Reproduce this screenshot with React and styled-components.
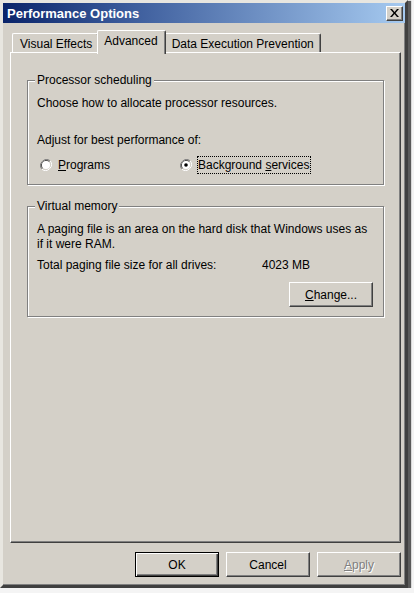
import React from "react";
import styled, { createGlobalStyle } from "styled-components";

const Global = createGlobalStyle`
  body {
    margin: 0;
    background: #f4f4f4;
    font-family: "Liberation Sans", Arial, sans-serif;
    font-size: 12px;
    color: #000;
  }
`;

export default function App() {
  return (
    <>
      <Global />
      <Window>
        <TitleBar>
          <Title>Performance Options</Title>
          <CloseButton>
            <svg width="9" height="8" viewBox="0 0 9 8">
              <path d="M0 0h2l2.5 3 2.5-3h2L5.5 4 9 8H7L4.5 5 2 8H0l3.5-4z" fill="#000" />
            </svg>
          </CloseButton>
        </TitleBar>
        <Body>
          <Tabs>
            <Tab>Visual Effects</Tab>
            <Tab active>Advanced</Tab>
            <Tab>Data Execution Prevention</Tab>
          </Tabs>
          <Panel>
            <Group>
              <Legend>Processor scheduling</Legend>
              <Line>Choose how to allocate processor resources.</Line>
              <Line top={22}>Adjust for best performance of:</Line>
              <RadioRow>
                <RadioItem>
                  <Radio />
                  <span><u>P</u>rograms</span>
                </RadioItem>
                <RadioItem>
                  <Radio checked />
                  <Focus>Background <u>s</u>ervices</Focus>
                </RadioItem>
              </RadioRow>
            </Group>
            <Group>
              <Legend>Virtual memory</Legend>
              <Line>A paging file is an area on the hard disk that Windows uses as</Line>
              <Line>if it were RAM.</Line>
              <SizeRow>
                <SizeLabel>Total paging file size for all drives:</SizeLabel>
                <span>4023 MB</span>
              </SizeRow>
              <ButtonRow>
                <Button><u>C</u>hange...</Button>
              </ButtonRow>
            </Group>
          </Panel>
          <Footer>
            <Button isDefault>OK</Button>
            <Button>Cancel</Button>
            <Button disabled><u>A</u>pply</Button>
          </Footer>
        </Body>
      </Window>
    </>
  );
}

function Radio({ checked }) {
  return (
    <svg width="12" height="12" viewBox="0 0 12 12">
      <path d="M10.2 1.8A6 6 0 0 0 1.8 10.2" stroke="#808080" strokeWidth="1" fill="none" />
      <path d="M9.5 2.5A5 5 0 0 0 2.5 9.5" stroke="#404040" strokeWidth="1" fill="none" />
      <path d="M1.8 10.2A6 6 0 0 0 10.2 1.8" stroke="#fff" strokeWidth="1" fill="none" />
      <path d="M2.5 9.5A5 5 0 0 0 9.5 2.5" stroke="#d4d0c8" strokeWidth="1" fill="none" />
      <circle cx="6" cy="6" r="4" fill="#fff" />
      {checked && <circle cx="6" cy="6" r="1.8" fill="#000" />}
    </svg>
  );
}

const Window = styled.div`
  width: 402px;
  height: 582px;
  background: #d4d0c8;
  border: 3px solid;
  border-color: #e8e6e0 #404040 #404040 #e8e6e0;
  box-shadow: inset -1px -1px 0 #808080, 2px 2px 1px 1px rgba(40, 40, 40, 0.75);
  display: flex;
  flex-direction: column;
`;

const TitleBar = styled.div`
  height: 20px;
  background: linear-gradient(90deg, #0a246a 0%, #3a5a9a 30%, #a6caf0 100%);
  display: flex;
  align-items: center;
  justify-content: space-between;
  padding: 0 2px 0 4px;
`;

const Title = styled.div`
  color: #fff;
  font-weight: bold;
  font-size: 13px;
`;

const CloseButton = styled.div`
  width: 17px;
  height: 15px;
  box-sizing: border-box;
  background: #d4d0c8;
  border: 1px solid;
  border-color: #fff #404040 #404040 #fff;
  box-shadow: inset -1px -1px 0 #808080;
  display: flex;
  align-items: center;
  justify-content: center;
`;

const Body = styled.div`
  flex: 1;
  display: flex;
  flex-direction: column;
  padding: 7px 4px 0 7px;
`;

const Tabs = styled.div`
  display: flex;
  align-items: flex-end;
  padding-left: 2px;
  height: 24px;
  position: relative;
  z-index: 1;
  margin-bottom: -2px;
`;

const Tab = styled.div`
  height: ${(p) => (p.active ? "24px" : "19px")};
  box-sizing: border-box;
  padding: ${(p) => (p.active ? "3px 7px 0 6px" : "3px 6px 0 7px")};
  margin: ${(p) => (p.active ? "0 -2px 0 -2px" : "0 0 2px 0")};
  background: #d4d0c8;
  border-top: 1px solid #fff;
  border-left: 1px solid #fff;
  border-right: 1px solid #404040;
  box-shadow: inset -1px 0 0 #808080;
  border-radius: 2px 2px 0 0;
  position: relative;
  z-index: ${(p) => (p.active ? 2 : 1)};
  white-space: nowrap;
`;

const Panel = styled.div`
  height: 491px;
  box-sizing: border-box;
  border: 1px solid;
  border-color: #fff #404040 #404040 #fff;
  box-shadow: inset -1px -1px 0 #808080;
  padding: 27px 16px 0 16px;
  display: flex;
  flex-direction: column;
  gap: 21px;
`;

const Group = styled.div`
  position: relative;
  border: 1px solid #808080;
  box-shadow: 1px 1px 0 #fff, inset 1px 1px 0 #fff;
  padding: 15px 10px 9px 9px;
`;

const Legend = styled.span`
  position: absolute;
  top: -8px;
  left: 7px;
  padding: 0 2px;
  background: #d4d0c8;
  line-height: 15px;
`;

const Line = styled.div`
  line-height: 15px;
  margin-top: ${(p) => p.top || 0}px;
  white-space: nowrap;
`;

const RadioRow = styled.div`
  display: flex;
  margin-top: 8px;
  margin-bottom: 1px;
  height: 18px;
  align-items: center;
`;

const RadioItem = styled.label`
  display: flex;
  align-items: center;
  gap: 6px;
  width: 137px;
  padding-left: 3px;
`;

const Focus = styled.span`
  outline: 1px dotted #000;
  padding: 1px 1px 1px 0;
`;

const SizeRow = styled.div`
  display: flex;
  line-height: 15px;
  margin-top: 6px;
`;

const SizeLabel = styled.span`
  width: 225px;
  flex-shrink: 0;
`;

const ButtonRow = styled.div`
  display: flex;
  justify-content: flex-end;
  margin-top: 9px;
`;

const Button = styled.div`
  width: 84px;
  height: 25px;
  box-sizing: border-box;
  display: flex;
  align-items: center;
  justify-content: center;
  background: #d4d0c8;
  border: 1px solid;
  border-color: ${(p) => (p.isDefault ? "#000" : "#fff #404040 #404040 #fff")};
  box-shadow: ${(p) =>
    p.isDefault
      ? "inset 1px 1px 0 #fff, inset -1px -1px 0 #404040, inset -2px -2px 0 #808080"
      : "inset -1px -1px 0 #808080"};
  color: ${(p) => (p.disabled ? "#808080" : "#000")};
  text-shadow: ${(p) => (p.disabled ? "1px 1px 0 #fff" : "none")};
`;

const Footer = styled.div`
  display: flex;
  justify-content: flex-end;
  gap: 7px;
  margin-top: 9px;
`;
